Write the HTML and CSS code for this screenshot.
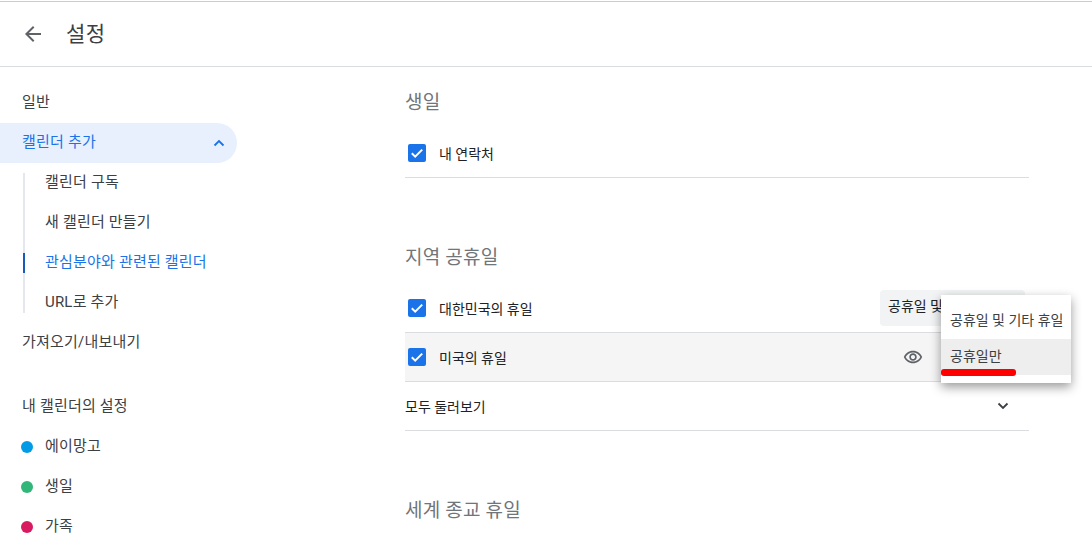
FILE: index.html
```html
<!DOCTYPE html>
<html lang="ko">
<head>
  <meta charset="UTF-8">
  <meta name="viewport" content="width=device-width, initial-scale=1.0">
  <title>설정</title>
  <link rel="stylesheet" href="styles.css">
</head>
<body>
  <header class="topbar">
    <svg class="back-icon" width="24" height="24" viewBox="0 0 24 24"><path d="M20 11H7.83l5.59-5.59L12 4l-8 8 8 8 1.41-1.41L7.83 13H20v-2z"/></svg>
    <h1>설정</h1>
  </header>

  <div class="layout">
    <!-- Sidebar -->
    <nav class="sidebar">
      <div class="nav-item">일반</div>
      <div class="nav-item active">
        <span>캘린더 추가</span>
        <svg width="12" height="8" viewBox="0 0 12 8"><path d="M1.5 6.5 6 2l4.5 4.5" fill="none" stroke="#1a73e8" stroke-width="1.8"/></svg>
      </div>
      <div class="sub-nav">
        <div class="sub-item">캘린더 구독</div>
        <div class="sub-item">새 캘린더 만들기</div>
        <div class="sub-item current">관심분야와 관련된 캘린더</div>
        <div class="sub-item">URL로 추가</div>
      </div>
      <div class="nav-item">가져오기/내보내기</div>
      <div class="nav-heading">내 캘린더의 설정</div>
      <div class="cal-item"><span class="dot blue"></span>에이망고</div>
      <div class="cal-item"><span class="dot green"></span>생일</div>
      <div class="cal-item"><span class="dot pink"></span>가족</div>
    </nav>

    <!-- Main settings -->
    <main class="content">
      <section class="group">
        <h2>생일</h2>
        <div class="row">
          <span class="check"><svg width="18" height="18" viewBox="0 0 18 18"><path d="M3.8 9.2 7.2 12.6 14.2 5.6" fill="none" stroke="#fff" stroke-width="2"/></svg></span>
          <span class="row-label">내 연락처</span>
        </div>
      </section>

      <section class="group">
        <h2>지역 공휴일</h2>
        <div class="row">
          <span class="check"><svg width="18" height="18" viewBox="0 0 18 18"><path d="M3.8 9.2 7.2 12.6 14.2 5.6" fill="none" stroke="#fff" stroke-width="2"/></svg></span>
          <span class="row-label">대한민국의 휴일</span>
          <div class="select">공휴일 및 기타 휴일</div>
        </div>
        <div class="row hovered">
          <span class="check"><svg width="18" height="18" viewBox="0 0 18 18"><path d="M3.8 9.2 7.2 12.6 14.2 5.6" fill="none" stroke="#fff" stroke-width="2"/></svg></span>
          <span class="row-label">미국의 휴일</span>
          <svg class="eye" width="20" height="20" viewBox="0 0 24 24"><path d="M12 6.5c3.79 0 7.17 2.13 8.82 5.5-1.65 3.37-5.02 5.5-8.82 5.5S4.83 15.37 3.18 12C4.83 8.63 8.21 6.5 12 6.5m0-2C7 4.5 2.73 7.61 1 12c1.73 4.39 6 7.5 11 7.5s9.27-3.11 11-7.5c-1.73-4.39-6-7.5-11-7.5zm0 5c1.38 0 2.5 1.12 2.5 2.5s-1.12 2.5-2.5 2.5-2.5-1.12-2.5-2.5 1.12-2.5 2.5-2.5m0-2c-2.48 0-4.5 2.02-4.5 4.5s2.02 4.5 4.5 4.5 4.5-2.02 4.5-4.5-2.02-4.5-4.5-4.5z"/></svg>
        </div>
        <div class="row browse">
          <span>모두 둘러보기</span>
          <svg width="12" height="8" viewBox="0 0 12 8"><path d="M1.5 1.5 6 6l4.5-4.5" fill="none" stroke="#3c4043" stroke-width="1.8"/></svg>
        </div>
      </section>

      <section class="group">
        <h2>세계 종교 휴일</h2>
      </section>
    </main>
  </div>

  <!-- Open dropdown for the holiday select -->
  <div class="menu">
    <div class="menu-item">공휴일 및 기타 휴일</div>
    <div class="menu-item selected">공휴일만</div>
    <div class="red-mark"></div>
  </div>
</body>
</html>
```

FILE: styles.css
```css
html, body {
  height: 550px;
}
body {
  font-family: Roboto, "Noto Sans CJK KR", sans-serif;
  margin: 0;
  overflow: hidden;
  background: #fff;
  color: #3c4043;
  font-size: 15px;
  letter-spacing: 0.2px;
  position: relative;
}
.topbar {
  height: 64px;
  margin-top: 1px;
  border-top: 1px solid #ccc;
  border-bottom: 1px solid #dadce0;
  display: flex;
  align-items: center;
  padding-left: 21px;
}
.topbar h1 {
  margin: 0 0 4px 21px;
  font-size: 21px;
  font-weight: 400;
  letter-spacing: 0.5px;
}
.back-icon {
  fill: #5f6368;
}
.layout {
  display: flex;
  padding-top: 14px;
}
.sidebar {
  width: 237px;
  flex-shrink: 0;
}
.nav-item {
  box-sizing: border-box;
  height: 40px;
  padding: 0 12px 2px 22px;
  display: flex;
  align-items: center;
  justify-content: space-between;
}
.nav-item.active {
  margin-top: 2px;
  margin-bottom: -2px;
  padding-bottom: 0;
  background: #e8f0fe;
  color: #1a73e8;
  border-radius: 0 20px 20px 0;
}
.nav-item.active span {
  margin-bottom: 6px;
}
.sub-nav {
  position: relative;
  padding-left: 23px;
}
.sub-nav::before {
  content: "";
  position: absolute;
  left: 23px;
  top: 12px;
  bottom: 8px;
  width: 2px;
  background: #e6e6ee;
}
.sub-item {
  height: 40px;
  line-height: 42px;
  padding-left: 22px;
}
.sub-item.current {
  color: #1a73e8;
  position: relative;
}
.sub-item.current::before {
  content: "";
  position: absolute;
  left: 0;
  top: 12px;
  height: 20px;
  width: 2px;
  background: #185abc;
}
.nav-heading {
  height: 40px;
  line-height: 42px;
  padding-left: 22px;
  margin-top: 24px;
}
.cal-item {
  box-sizing: border-box;
  height: 40px;
  display: flex;
  align-items: center;
  padding: 0 0 2px 21px;
}
.dot {
  width: 12px;
  height: 12px;
  border-radius: 50%;
  margin-right: 12px;
  margin-top: 6px;
}
.dot.blue { background: #039be5; }
.dot.green { background: #33b679; }
.dot.pink { background: #d81b60; }
.content {
  margin-left: 168px;
  width: 624px;
}
.group {
  margin-bottom: 58px;
}
.group:last-child {
  margin-bottom: 0;
}
.group h2 {
  margin: 0 0 8px;
  height: 40px;
  line-height: 44px;
  font-size: 19px;
  letter-spacing: 0.2px;
  font-weight: 400;
  color: #70757a;
}
.row {
  height: 48px;
  border-bottom: 1px solid #dadce0;
  display: flex;
  align-items: center;
  color: #202124;
  font-size: 14px;
  letter-spacing: 0;
}
.row.hovered {
  background: #f5f5f5;
}
.row.browse {
  justify-content: space-between;
  padding-right: 20px;
}
.check {
  width: 18px;
  height: 18px;
  margin-left: 3px;
  margin-right: 13px;
  border-radius: 2px;
  background: #1a73e8;
  display: flex;
}
.select {
  margin-left: auto;
  margin-right: 4px;
  width: 137px;
  height: 36px;
  line-height: 32px;
  padding-left: 8px;
  background: #f1f3f4;
  border-radius: 4px;
  white-space: nowrap;
  overflow: hidden;
}
.eye {
  margin-left: auto;
  margin-right: 106px;
  fill: #5f6368;
}
.menu {
  position: absolute;
  left: 941px;
  top: 295px;
  width: 130px;
  height: 88px;
  padding-top: 8px;
  box-sizing: border-box;
  background: #fff;
  box-shadow: 0 4px 10px rgba(0, 0, 0, 0.4);
  font-size: 14px;
  letter-spacing: 0;
  color: #3c4043;
}
.menu-item {
  height: 36px;
  line-height: 34px;
  padding-left: 9px;
  white-space: nowrap;
}
.menu-item.selected {
  background: #eee;
}
.red-mark {
  position: absolute;
  left: 0;
  top: 74px;
  width: 75px;
  height: 7px;
  background: #f00;
  border-radius: 3px;
}
```
